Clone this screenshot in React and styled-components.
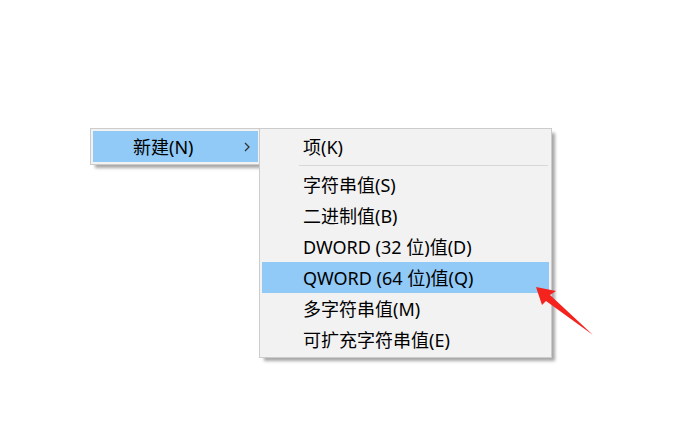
import React from "react";
import styled, { createGlobalStyle } from "styled-components";

const GlobalStyle = createGlobalStyle`
    html, body {
        margin: 0;
        padding: 0;
        background: #ffffff;
    }
`

const Page = styled.div`
    position: relative;
    width: 692px;
    height: 448px;
    box-sizing: border-box;
    padding: 128px 0 0 90px;
    display: flex;
    align-items: flex-start;
    font-family: "Noto Sans", "Noto Sans CJK SC", sans-serif;
    font-size: 18px;
    color: #000;
`

const Menu = styled.div`
    position: relative;
    z-index: ${props => props.$layer || 1};
    margin-left: ${props => props.$overlap || 0}px;
    width: ${props => props.$width}px;
    box-sizing: border-box;
    padding: 2px;
    background: #f2f2f2;
    border: 1px solid #cccccc;
    box-shadow: 4px 4px 3px -1px rgba(0, 0, 0, 0.35);
    display: flex;
    flex-direction: column;
`

const Item = styled.div`
    height: 31px;
    display: flex;
    align-items: center;
    padding-left: ${props => props.$indent}px;
    padding-right: 8px;
    background: ${props => props.$active ? "#91c9f7" : "transparent"};
    white-space: nowrap;
`

const Label = styled.span`
    flex: 1;
    line-height: 1;
`

const Separator = styled.div`
    height: 1px;
    margin: 3px 1px 3px 37px;
    background: #d7d7d7;
`

const Arrow = styled.svg`
    position: absolute;
    z-index: 3;
    left: 530px;
    top: 280px;
`

function Chevron()
{
    return (
        <svg width="6" height="10" viewBox="0 0 6 10">
            <polyline points="1,1 5,5 1,9" fill="none" stroke="#333" strokeWidth="1.3" />
        </svg>
    );
}

const subItems = [
    "字符串值(S)",
    "二进制值(B)",
    "DWORD (32 位)值(D)",
    "QWORD (64 位)值(Q)",
    "多字符串值(M)",
    "可扩充字符串值(E)"
];

export default function App()
{
    return (
        <>
            <GlobalStyle />
            <Page>
                <Menu $width={171}>
                    <Item $indent={40} $active>
                        <Label>新建(N)</Label>
                        <Chevron />
                    </Item>
                </Menu>

                <Menu $width={293} $overlap={-2} $layer={2}>
                    <Item $indent={41}>
                        <Label>项(K)</Label>
                    </Item>
                    <Separator />
                    {subItems.map((text) =>
                    (
                        <Item key={text} $indent={41} $active={text.startsWith("QWORD")}>
                            <Label>{text}</Label>
                        </Item>
                    ))}
                </Menu>

                {/* red pointer drawn over the submenu */}
                <Arrow width="70" height="60" viewBox="0 0 70 60">
                    <polygon points="6,7 26,11 20,15 63,55 16,21 12,25" fill="#f5231e" />
                </Arrow>
            </Page>
        </>
    );
}
